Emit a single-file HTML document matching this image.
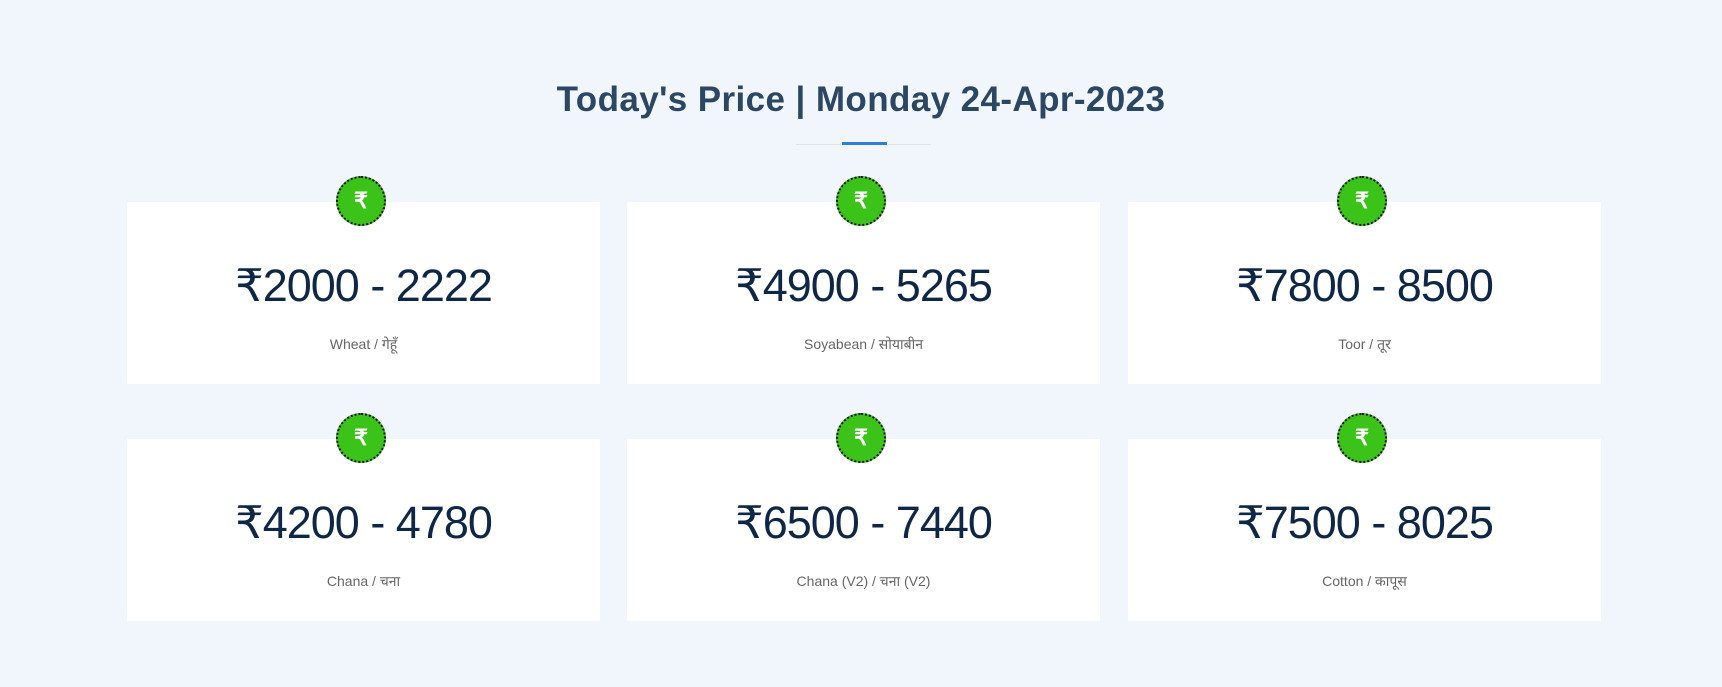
<!DOCTYPE html>
<html><head><style>
body{margin:0;width:1722px;height:687px;background:#f1f6fd;font-family:"Liberation Sans","Noto Sans CJK SC",sans-serif;position:relative;overflow:hidden}
h1{position:absolute;top:80px;left:0;width:1722px;text-align:center;margin:0;font-size:35px;font-weight:bold;color:#2b4763;letter-spacing:0.4px}
.gl{position:absolute;top:144px;left:796px;width:135px;height:1px;background:#dde3ea}
.bl{position:absolute;top:142px;left:842px;width:45px;height:3px;background:#2f7fd8}
.card{position:absolute;width:473px;height:182px;background:#fff}
.ic{position:absolute;left:209px;top:-26px;width:50px;height:50px;border-radius:50%;background:#3cc31a;border:2px dotted #111;box-sizing:border-box;color:#fff;font-weight:bold;font-size:22px;text-align:center;line-height:46px}
.p{position:absolute;top:57px;width:100%;text-align:center;font-size:45px;color:#0f2747;letter-spacing:-1px}
.l{position:absolute;top:133px;width:100%;text-align:center;font-size:14px;color:#666}
</style></head><body>
<h1>Today's Price | Monday 24-Apr-2023</h1>
<div class="gl"></div><div class="bl"></div>
<div class="card" style="left:127px;top:202px"><div class="ic">₹</div><div class="p">₹2000 - 2222</div><div class="l">Wheat / गेहूँ</div></div>
<div class="card" style="left:627px;top:202px"><div class="ic">₹</div><div class="p">₹4900 - 5265</div><div class="l">Soyabean / सोयाबीन</div></div>
<div class="card" style="left:1128px;top:202px"><div class="ic">₹</div><div class="p">₹7800 - 8500</div><div class="l">Toor / तूर</div></div>
<div class="card" style="left:127px;top:439px"><div class="ic">₹</div><div class="p">₹4200 - 4780</div><div class="l">Chana / चना</div></div>
<div class="card" style="left:627px;top:439px"><div class="ic">₹</div><div class="p">₹6500 - 7440</div><div class="l">Chana (V2) / चना (V2)</div></div>
<div class="card" style="left:1128px;top:439px"><div class="ic">₹</div><div class="p">₹7500 - 8025</div><div class="l">Cotton / कापूस</div></div>
</body></html>
